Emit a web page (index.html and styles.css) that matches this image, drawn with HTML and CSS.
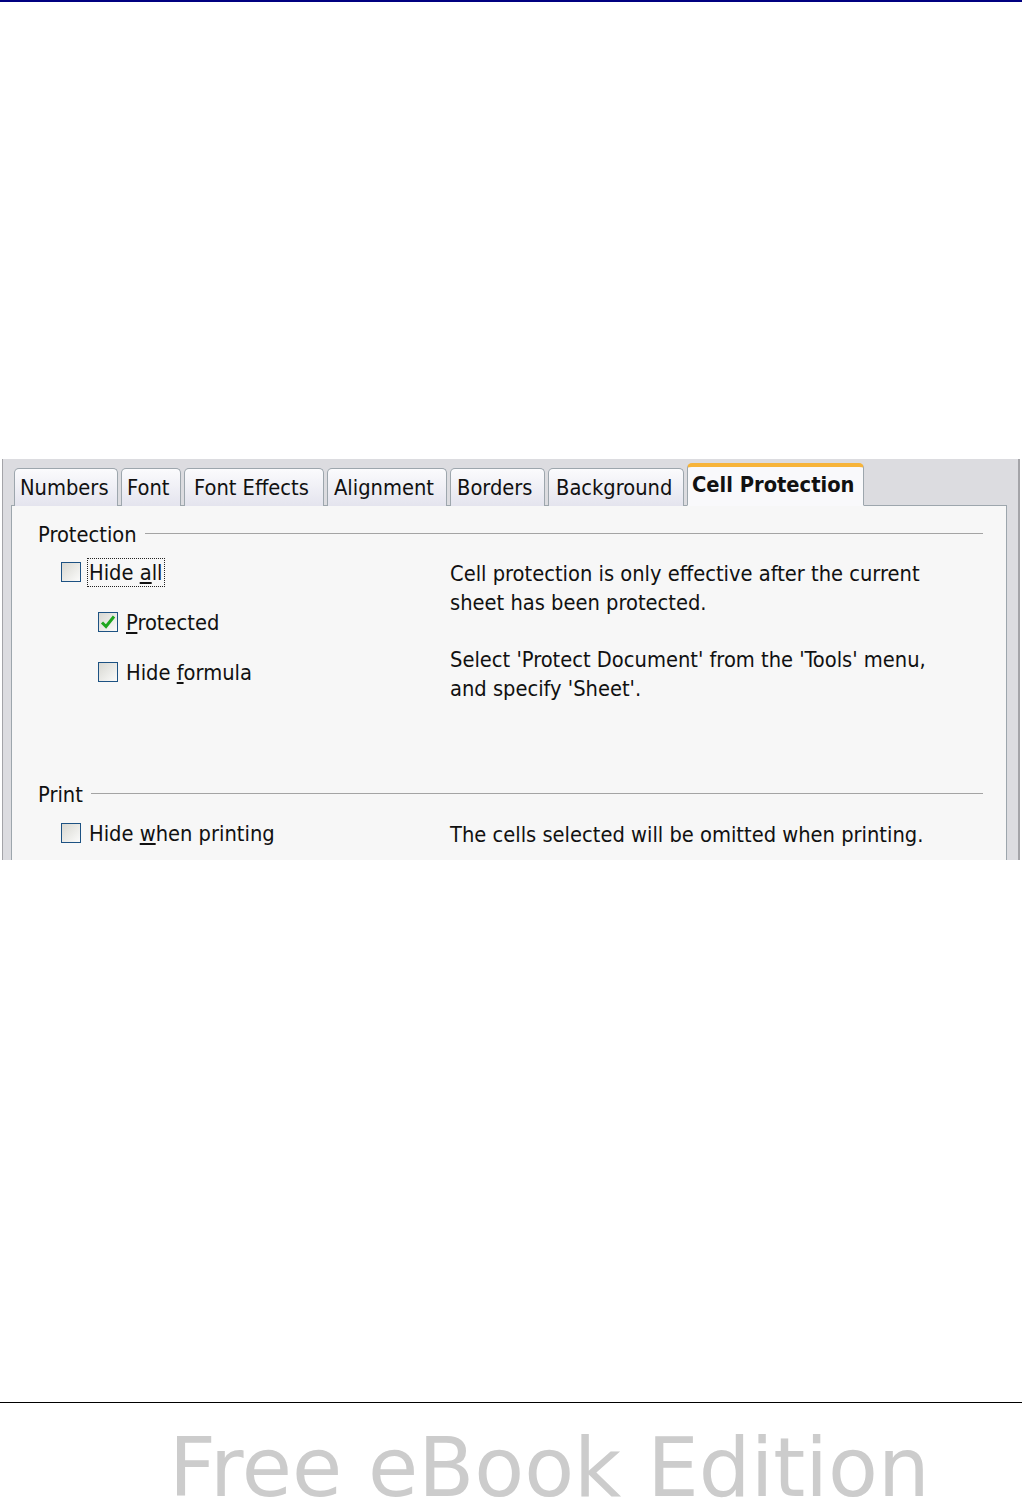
FILE: index.html
```html
<!DOCTYPE html>
<html>
<head>
    <title>Cell Protection</title>
    <link rel="stylesheet" href="styles.css">
</head>
<body>
    <div class="top-rule"></div>

    <div class="dialog">
        <div class="tabs">
            <div class="tab tab-numbers">Numbers</div>
            <div class="tab tab-font">Font</div>
            <div class="tab tab-effects">Font Effects</div>
            <div class="tab tab-align">Alignment</div>
            <div class="tab tab-borders">Borders</div>
            <div class="tab tab-bg">Background</div>
            <div class="tab active">Cell Protection</div>
        </div>

        <div class="panel">
            <div class="group-title"><span>Protection</span><span class="rule"></span></div>
            <div class="group-body">
                <div class="options">
                    <div class="option">
                        <span class="check"></span>
                        <span class="focus">Hide <u>a</u>ll</span>
                    </div>
                    <div class="option sub">
                        <span class="check checked">
                            <svg width="18" height="18" viewBox="0 0 18 18"><path d="M3 9.5 L7 13.5 L15 3.5" fill="none" stroke="#1fa61f" stroke-width="3"/></svg>
                        </span>
                        <span><u>P</u>rotected</span>
                    </div>
                    <div class="option sub">
                        <span class="check"></span>
                        <span>Hide <u>f</u>ormula</span>
                    </div>
                </div>
                <div class="notes">
                    <p>Cell protection is only effective after the current<br>sheet has been protected.</p>
                    <p>Select 'Protect Document' from the 'Tools' menu,<br>and specify 'Sheet'.</p>
                </div>
            </div>

            <div class="group-title print"><span>Print</span><span class="rule"></span></div>
            <div class="group-body print-body">
                <div class="options">
                    <div class="option">
                        <span class="check"></span>
                        <span>Hide <u>w</u>hen printing</span>
                    </div>
                </div>
                <div class="notes">
                    <p>The cells selected will be omitted when printing.</p>
                </div>
            </div>
        </div>
    </div>

    <div class="footer">
        <div class="footer-text">Free eBook Edition</div>
    </div>
</body>
</html>
```

FILE: styles.css
```css
body { margin: 0; background: #fff; font-family: "DejaVu Sans Condensed", "DejaVu Sans", sans-serif; color: #111; }
.top-rule { height: 2px; background: #000080; }

.dialog { margin: 457px 0 0 2px; width: 1015px; height: 401px; overflow: hidden; background: #dcdce0; border-left: 1px solid #a4a4a8; border-right: 2px solid #a4a4a8; font-size: 21.7px; }
.tabs { display: flex; gap: 3px; align-items: flex-end; padding: 4px 0 0 11px; position: relative; z-index: 1; margin-bottom: -1px; }
.tab { height: 38px; line-height: 37px; padding: 0 0 0 5px; border: 1px solid #9da6ad; border-bottom: none; border-radius: 5px 5px 0 0; background: linear-gradient(#fbfbfd, #e4e4ee); white-space: nowrap; box-sizing: border-box; }
.tab-numbers { width: 104px; }
.tab-font { width: 60px; }
.tab-effects { width: 140px; padding-left: 9px; }
.tab-align { width: 120px; padding-left: 6px; }
.tab-borders { width: 95px; padding-left: 6px; }
.tab-bg { width: 136px; padding-left: 7px; }
.tab.active { width: 177px; height: 43px; line-height: 36px; border-top: 4px solid #f7b43a; background: #f9f9fb; font-weight: bold; padding-left: 4px; border-bottom: 1px solid #f9f9fb; }

.panel { margin: 0 11px 0 8px; height: 400px; background: #f7f7f7; border: 1px solid #9da6ad; padding: 17px 23px 0 26px; }
.group-title { display: flex; align-items: center; gap: 8px; height: 24px; line-height: 24px; }
.group-title .rule { flex: 1; border-top: 1px solid #a4a4a4; margin-top: -3px; }
.group-title.print { margin-top: 80px; }

.group-body { display: grid; grid-template-columns: 412px 1fr; }
.options { display: flex; flex-direction: column; gap: 20px; padding: 10px 0 0 23px; }
.option { display: flex; align-items: center; gap: 8px; height: 30px; }
.option.sub { margin-left: 37px; }
.check { width: 18px; height: 18px; border: 1px solid #1d5283; background: linear-gradient(135deg, #d8d8d2, #fbfbfa); display: flex; align-items: center; justify-content: center; }
.focus { outline: 1px dotted #222; outline-offset: 1px; }

.notes { padding-top: 12px; }
.notes p { margin: 0 0 28px; line-height: 29px; }
.notes p:last-child { margin-bottom: 0; }
.print-body .options { padding-top: 11px; }
.print-body .notes { padding-top: 13px; }

.footer { margin-top: 542px; border-top: 1px solid #000; }
.footer-text { padding: 32px 0 0 169px; font-family: "DejaVu Sans", sans-serif; font-size: 81.6px; line-height: 66px; color: #cccccc; white-space: nowrap; }
```
